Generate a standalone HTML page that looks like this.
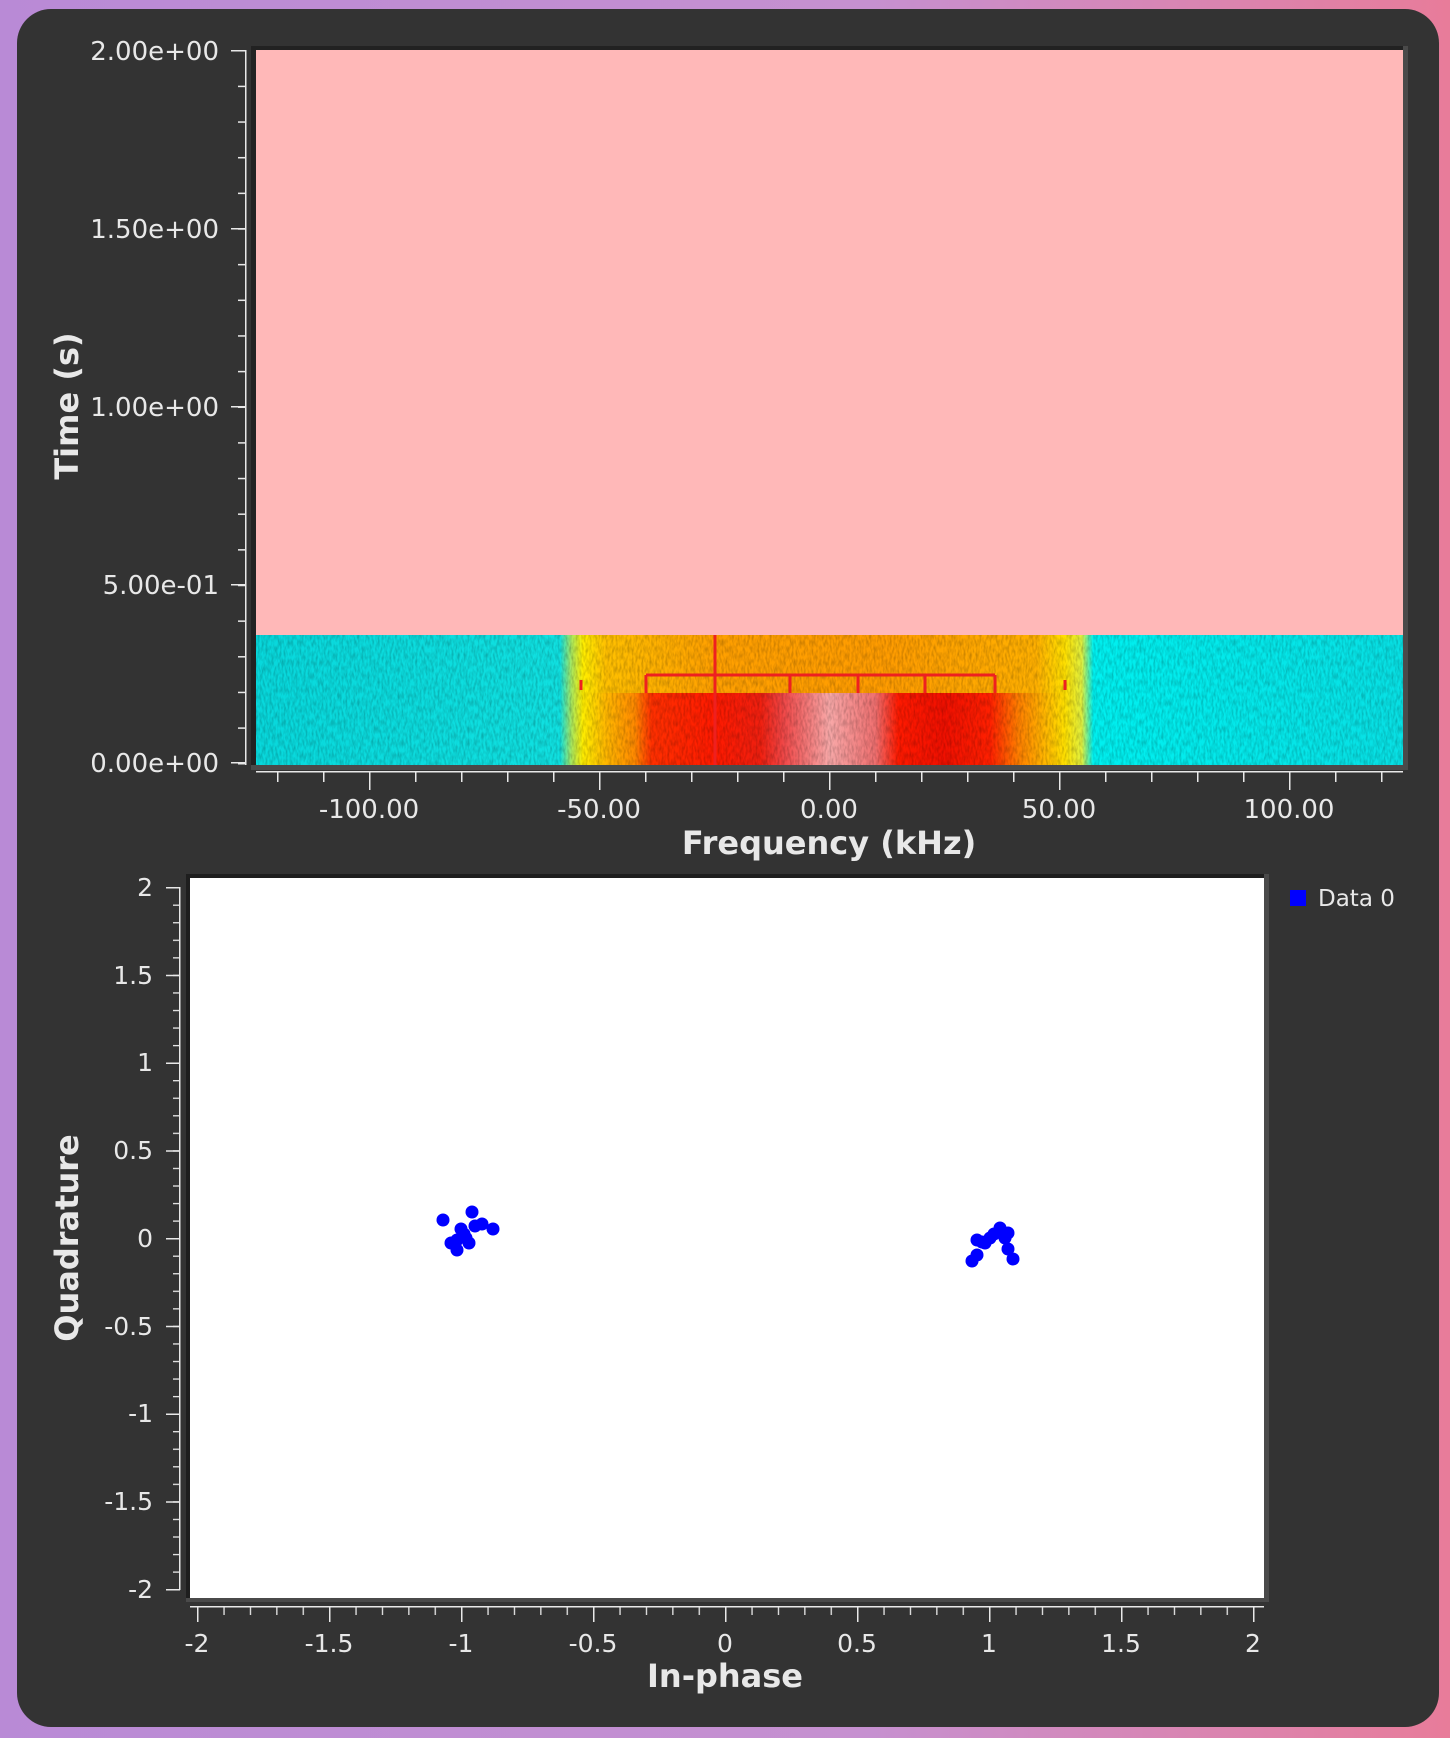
<!DOCTYPE html>
<html><head><meta charset="utf-8"><style>
html,body{margin:0;padding:0;width:1450px;height:1738px;overflow:hidden;background:linear-gradient(90deg,#b98ad6 0%,#c690d0 60%,#e87c9a 100%);}
svg{display:block}
text{font-family:"DejaVu Sans","Liberation Sans",sans-serif;fill:#e8e8e8}
</style></head><body>
<svg width="1450" height="1738" viewBox="0 0 1450 1738">
<defs>
<linearGradient id="gTop" gradientUnits="userSpaceOnUse" x1="256" y1="0" x2="1403" y2="0">
<stop offset="0" stop-color="#08d8dc"/>
<stop offset="0.265" stop-color="#10e0e0"/>
<stop offset="0.275" stop-color="#a8e860"/>
<stop offset="0.285" stop-color="#ffee00"/>
<stop offset="0.305" stop-color="#ffc000"/>
<stop offset="0.4" stop-color="#ffa000"/>
<stop offset="0.55" stop-color="#ff9c00"/>
<stop offset="0.68" stop-color="#ffb000"/>
<stop offset="0.705" stop-color="#ffe000"/>
<stop offset="0.72" stop-color="#e0f040"/>
<stop offset="0.73" stop-color="#00f0f0"/>
<stop offset="1" stop-color="#08e0e4"/>
</linearGradient>
<linearGradient id="gBot" gradientUnits="userSpaceOnUse" x1="256" y1="0" x2="1403" y2="0">
<stop offset="0" stop-color="#08d8dc"/>
<stop offset="0.265" stop-color="#10e0e0"/>
<stop offset="0.275" stop-color="#a8e860"/>
<stop offset="0.285" stop-color="#ffee00"/>
<stop offset="0.305" stop-color="#ffb800"/>
<stop offset="0.33" stop-color="#ff8a00"/>
<stop offset="0.345" stop-color="#ff3000"/>
<stop offset="0.4" stop-color="#ff1a00"/>
<stop offset="0.44" stop-color="#f02010"/>
<stop offset="0.46" stop-color="#f04848"/>
<stop offset="0.5" stop-color="#f8a8a8"/>
<stop offset="0.54" stop-color="#f07070"/>
<stop offset="0.56" stop-color="#ff1a00"/>
<stop offset="0.6" stop-color="#f01000"/>
<stop offset="0.64" stop-color="#ff2000"/>
<stop offset="0.665" stop-color="#ff8000"/>
<stop offset="0.685" stop-color="#ffb000"/>
<stop offset="0.705" stop-color="#ffe000"/>
<stop offset="0.72" stop-color="#e0f040"/>
<stop offset="0.73" stop-color="#00f0f0"/>
<stop offset="1" stop-color="#08e0e4"/>
</linearGradient>
<filter id="noise" x="0" y="0" width="100%" height="100%">
<feTurbulence type="fractalNoise" baseFrequency="0.5 0.15" numOctaves="2" seed="3"/>
<feColorMatrix type="matrix" values="0 0 0 0 0  0 0 0 0 0  0 0 0 0 0  0 0 0 1.4 -0.5"/>
</filter>
<pattern id="sy" x="0" y="50" width="20" height="35.65" patternUnits="userSpaceOnUse"><rect x="0" y="0" width="20" height="1.5" fill="#e8e8e8"/></pattern>
<pattern id="sx" x="277" y="0" width="46" height="20" patternUnits="userSpaceOnUse"><rect x="0" y="0" width="1.5" height="20" fill="#e8e8e8"/></pattern>
<pattern id="cy" x="0" y="887" width="20" height="17.55" patternUnits="userSpaceOnUse"><rect x="0" y="0" width="20" height="1.3" fill="#e8e8e8"/></pattern>
<pattern id="cx" x="197" y="0" width="26.4" height="20" patternUnits="userSpaceOnUse"><rect x="0" y="0" width="1.3" height="20" fill="#e8e8e8"/></pattern>
</defs>

<rect x="17" y="9" width="1422" height="1718" rx="34" fill="#333333"/>

<rect x="251" y="46" width="1157" height="724" fill="#222"/>
<rect x="1403" y="46" width="5" height="724" fill="#4a4a4a"/>
<rect x="251" y="765" width="1157" height="5" fill="#4a4a4a"/>
<rect x="256" y="50" width="1147" height="585" fill="#ffb8b8"/>
<rect x="256" y="635" width="1147" height="58" fill="url(#gTop)"/>
<rect x="256" y="693" width="1147" height="72" fill="url(#gBot)"/>
<rect x="256" y="635" width="1147" height="130" filter="url(#noise)" opacity="0.3"/>
<g stroke="#ee2020" stroke-width="3" fill="none">
<path d="M715 635 V765"/>
<path d="M646 675 H995 M646 675 V693 M995 675 V693 M790 675 V693 M858 675 V693 M925 675 V693 M1065 680 V690 M581 680 V690"/>
</g>
<rect x="245" y="50" width="1.5" height="715" fill="#e8e8e8"/>
<rect x="238" y="50" width="8" height="716" fill="url(#sy)"/>
<g fill="#e8e8e8">
<rect x="231" y="50" width="15" height="1.5"/><rect x="231" y="228" width="15" height="1.5"/><rect x="231" y="406" width="15" height="1.5"/><rect x="231" y="584" width="15" height="1.5"/><rect x="231" y="762" width="15" height="1.5"/>
</g>
<g font-size="26" text-anchor="end">
<text x="219" y="60">2.00e+00</text>
<text x="219" y="238">1.50e+00</text>
<text x="219" y="416">1.00e+00</text>
<text x="219" y="594">5.00e-01</text>
<text x="219" y="772">0.00e+00</text>
</g>
<text transform="translate(78,406) rotate(-90)" font-size="32" font-weight="bold" text-anchor="middle">Time (s)</text>
<rect x="256" y="771" width="1147" height="1.5" fill="#e8e8e8"/>
<rect x="277" y="772" width="1106" height="10" fill="url(#sx)"/>
<g fill="#e8e8e8">
<rect x="369" y="772" width="1.5" height="18"/><rect x="599" y="772" width="1.5" height="18"/><rect x="829" y="772" width="1.5" height="18"/><rect x="1059" y="772" width="1.5" height="18"/><rect x="1289" y="772" width="1.5" height="18"/>
</g>
<g font-size="26" text-anchor="middle">
<text x="369" y="818">-100.00</text>
<text x="599" y="818">-50.00</text>
<text x="829" y="818">0.00</text>
<text x="1059" y="818">50.00</text>
<text x="1289" y="818">100.00</text>
</g>
<text x="829" y="854" font-size="32" font-weight="bold" text-anchor="middle">Frequency (kHz)</text>

<rect x="186" y="874" width="1083" height="728" fill="#1e1e1e"/>
<rect x="1264" y="874" width="5" height="728" fill="#4a4a4a"/>
<rect x="186" y="1598" width="1083" height="4" fill="#4a4a4a"/>
<rect x="190" y="878" width="1074" height="720" fill="#ffffff"/>
<rect x="179" y="887" width="1.5" height="703" fill="#e8e8e8"/>
<rect x="173" y="887" width="7" height="703" fill="url(#cy)"/>
<g fill="#e8e8e8">
<rect x="166" y="887" width="14" height="1.5"/><rect x="166" y="974.75" width="14" height="1.5"/><rect x="166" y="1062.5" width="14" height="1.5"/><rect x="166" y="1150.25" width="14" height="1.5"/><rect x="166" y="1238" width="14" height="1.5"/><rect x="166" y="1325.75" width="14" height="1.5"/><rect x="166" y="1413.5" width="14" height="1.5"/><rect x="166" y="1501.25" width="14" height="1.5"/><rect x="166" y="1589" width="14" height="1.5"/>
</g>
<g font-size="25" text-anchor="end">
<text x="153" y="896">2</text>
<text x="153" y="984">1.5</text>
<text x="153" y="1071">1</text>
<text x="153" y="1159">0.5</text>
<text x="153" y="1247">0</text>
<text x="153" y="1335">-0.5</text>
<text x="153" y="1422">-1</text>
<text x="153" y="1510">-1.5</text>
<text x="153" y="1598">-2</text>
</g>
<text transform="translate(78,1238) rotate(-90)" font-size="32" font-weight="bold" text-anchor="middle">Quadrature</text>
<rect x="190" y="1606" width="1074" height="1.5" fill="#e8e8e8"/>
<rect x="197" y="1607" width="1058" height="8" fill="url(#cx)"/>
<g fill="#e8e8e8">
<rect x="197" y="1607" width="1.5" height="15"/><rect x="329" y="1607" width="1.5" height="15"/><rect x="461" y="1607" width="1.5" height="15"/><rect x="593" y="1607" width="1.5" height="15"/><rect x="725" y="1607" width="1.5" height="15"/><rect x="857" y="1607" width="1.5" height="15"/><rect x="989" y="1607" width="1.5" height="15"/><rect x="1121" y="1607" width="1.5" height="15"/><rect x="1253" y="1607" width="1.5" height="15"/>
</g>
<g font-size="25" text-anchor="middle">
<text x="197" y="1652">-2</text>
<text x="329" y="1652">-1.5</text>
<text x="461" y="1652">-1</text>
<text x="593" y="1652">-0.5</text>
<text x="725" y="1652">0</text>
<text x="857" y="1652">0.5</text>
<text x="989" y="1652">1</text>
<text x="1121" y="1652">1.5</text>
<text x="1253" y="1652">2</text>
</g>
<text x="725" y="1687" font-size="32" font-weight="bold" text-anchor="middle">In-phase</text>

<g fill="#0000ff">
<circle cx="443" cy="1220" r="6.5"/>
<circle cx="451" cy="1243" r="6.5"/>
<circle cx="457" cy="1250" r="6.5"/>
<circle cx="461" cy="1229" r="6.5"/>
<circle cx="464" cy="1234" r="6.5"/>
<circle cx="469" cy="1243" r="6.5"/>
<circle cx="472" cy="1212" r="6.5"/>
<circle cx="475" cy="1226" r="6.5"/>
<circle cx="482" cy="1224" r="6.5"/>
<circle cx="493" cy="1229" r="6.5"/>
<circle cx="466" cy="1238" r="6.5"/>
<circle cx="457" cy="1240" r="6.5"/>
<circle cx="972" cy="1261" r="6.5"/>
<circle cx="977" cy="1255" r="6.5"/>
<circle cx="977" cy="1240" r="6.5"/>
<circle cx="985" cy="1243" r="6.5"/>
<circle cx="990" cy="1238" r="6.5"/>
<circle cx="994" cy="1234" r="6.5"/>
<circle cx="1000" cy="1228" r="6.5"/>
<circle cx="1005" cy="1238" r="6.5"/>
<circle cx="1008" cy="1233" r="6.5"/>
<circle cx="1008" cy="1249" r="6.5"/>
<circle cx="1013" cy="1259" r="6.5"/>
<circle cx="982" cy="1242" r="6.5"/>
</g>

<rect x="1290" y="890" width="16" height="16" fill="#0000ff"/>
<text x="1318" y="906" font-size="23">Data 0</text>
</svg>
</body></html>
